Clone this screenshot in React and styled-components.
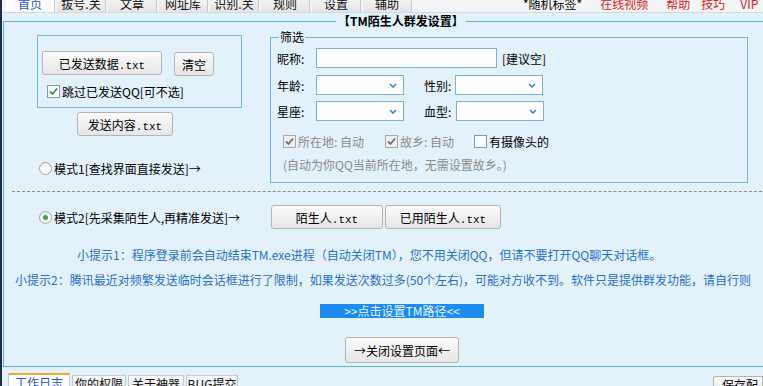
import React from 'react';
import styled, { createGlobalStyle } from 'styled-components';

const GlobalStyle = createGlobalStyle`
  html, body { margin: 0; padding: 0; background: #E3F1FA; }
  body {
    font-family: "Noto Sans CJK SC", "Liberation Sans", sans-serif;
    font-size: 12px;
    color: #000;
  }
`;

const Window = styled.div`
  width: 763px;
  height: 386px;
  overflow: hidden;
  box-sizing: border-box;
  background: #E3F1FA;
  border-left: 2px solid #1F2D47;
  display: flex;
  flex-direction: column;
`;

const TopBar = styled.div`
  height: 12px;
  flex: none;
  display: flex;
  align-items: flex-end;
  background: #F2F4F5;
  border-bottom: 1px solid #D3DADE;
  overflow: hidden;
  padding-left: 4px;
`;

const Tab = styled.div`
  width: 49px;
  height: 15px;
  line-height: 14px;
  margin-right: 2px;
  text-align: center;
  flex: none;
  background: ${p => (p.$active ? '#FFFFFF' : 'linear-gradient(#F6F6F6, #E4E4E4)')};
  color: ${p => (p.$active ? '#2255CC' : '#111')};
  border-right: 1px solid #C9C9C9;
  box-sizing: border-box;
`;

const HeadLink = styled.div`
  flex: none;
  height: 15px;
  line-height: 14px;
  margin-left: ${p => p.$ml}px;
  color: ${p => (p.$red ? '#E0201B' : '#000')};
  white-space: nowrap;
`;

const Main = styled.fieldset`
  margin: 1px 0 0 1px;
  padding: 0;
  width: 800px;
  height: 353px;
  box-sizing: border-box;
  border: 1px solid #5DB3D3;
  flex: none;
  min-inline-size: 0;
`;

const MainLegend = styled.legend`
  margin-left: 332px;
  padding: 0 2px;
  line-height: 14px;
  height: 14px;
  font-weight: 600;
`;

const TopSection = styled.div`
  display: flex;
  margin-top: 3px;
`;

const LeftCol = styled.div`
  width: 266px;
  flex: none;
  display: flex;
  flex-direction: column;
`;

const SubBox = styled.div`
  margin: 4px 0 0 33px;
  width: 205px;
  height: 73px;
  box-sizing: border-box;
  border: 1px solid #6DBAD8;
  padding: 15px 0 0 4px;
`;

const BtnRow = styled.div`
  display: flex;
  align-items: flex-start;
  gap: ${p => p.$gap || 0}px;
  margin-left: ${p => p.$ml || 0}px;
  margin-top: ${p => p.$mt || 0}px;
`;

const Button = styled.button`
  font-family: inherit;
  font-size: 12px;
  color: #000;
  width: ${p => p.$w}px;
  height: ${p => p.$h || 24}px;
  margin-top: ${p => p.$mt || 0}px;
  padding: 0;
  box-sizing: border-box;
  border: 1px solid #B4B4B4;
  border-radius: 3px;
  background: linear-gradient(#FBFBFB, #E6E6E6);
  white-space: nowrap;
  flex: none;
`;

const Mono = styled.span`
  font-family: "Liberation Mono", monospace;
  font-size: 11px;
`;

const CheckRow = styled.label`
  display: flex;
  align-items: center;
  gap: 2px;
  margin-top: ${p => p.$mt || 0}px;
  margin-left: ${p => p.$ml || 0}px;
  color: ${p => (p.$gray ? '#8A8A8A' : '#000')};
  white-space: nowrap;
  height: 15px;
`;

const CheckBox = styled.span`
  width: 13px;
  height: 13px;
  box-sizing: border-box;
  flex: none;
  border: 1px solid ${p => (p.$disabled ? '#A8A8A8' : '#7E9DB5')};
  background: ${p => (p.$disabled ? '#EFEFEF' : '#FFFFFF')};
  display: flex;
  align-items: center;
  justify-content: center;
`;

const RadioCircle = styled.span`
  width: 13px;
  height: 13px;
  box-sizing: border-box;
  flex: none;
  border-radius: 50%;
  border: 1px solid #9AA6B2;
  background: linear-gradient(#F4F4F4, #FFFFFF);
  display: flex;
  align-items: center;
  justify-content: center;
  &::after {
    content: '';
    width: 5px;
    height: 5px;
    border-radius: 50%;
    background: ${p => (p.$on ? '#3DA33D' : 'transparent')};
  }
`;

const Filter = styled.fieldset`
  margin: 0;
  padding: 0 0 0 6px;
  width: 478px;
  height: 152px;
  box-sizing: border-box;
  border: 1px solid #6DBAD8;
  min-inline-size: 0;
  flex: none;
`;

const FilterLegend = styled.legend`
  margin-left: 2px;
  padding: 0 1px;
  height: 12px;
  line-height: 12px;
`;

const FormRow = styled.div`
  display: flex;
  align-items: center;
  height: ${p => p.$h || 20}px;
  margin-top: ${p => p.$mt || 0}px;
  white-space: nowrap;
`;

const Label = styled.span`
  width: ${p => p.$w}px;
  flex: none;
  margin-left: ${p => p.$ml || 0}px;
`;

const TextBox = styled.div`
  width: ${p => p.$w}px;
  height: 20px;
  box-sizing: border-box;
  border: 1px solid #7EB3CF;
  background: #fff;
  flex: none;
  margin-right: 5px;
`;

const SelectBox = styled.div`
  width: ${p => p.$w}px;
  height: 20px;
  box-sizing: border-box;
  border: 1px solid #7EB3CF;
  background: #fff;
  flex: none;
  display: flex;
  align-items: center;
  justify-content: flex-end;
  padding-right: 6px;
`;

const Note = styled.div`
  color: #8A8A8A;
  margin: 9px 0 0 6px;
  line-height: 14px;
`;

const Dashed = styled.div`
  margin: 8px 0 0 8px;
  border-top: 1px dashed #8C8C8C;
`;

const ModeRow = styled.div`
  display: flex;
  align-items: center;
  margin-top: 13px;
  height: 24px;
`;

const ModeLabel = styled.div`
  width: 232px;
  flex: none;
  margin-left: 35px;
`;

const Tip = styled.div`
  color: #2673C9;
  line-height: 16px;
  white-space: nowrap;
  margin-top: ${p => p.$mt}px;
  margin-left: ${p => p.$ml}px;
`;

const PathBar = styled.div`
  margin: 16px 0 0 316px;
  width: 164px;
  height: 14px;
  line-height: 14px;
  background: #1C8CF0;
  color: #EAF4FF;
  text-align: center;
`;

const Center = styled.div`
  margin: 19px 0 0 341px;
`;

const BottomBar = styled.div`
  display: flex;
  align-items: flex-end;
  height: 19px;
  padding-left: 6px;
`;

const BottomTab = styled.div`
  height: ${p => (p.$active ? 13 : 11)}px;
  line-height: 16px;
  width: ${p => p.$w}px;
  margin-right: 2px;
  box-sizing: border-box;
  text-align: center;
  overflow: hidden;
  background: ${p => (p.$active ? '#FFFFFF' : 'linear-gradient(#FAFAFA, #EDEDED)')};
  border: 1px solid #C6CDD2;
  border-bottom: none;
  border-top: ${p => (p.$active ? '2px solid #F0A830' : '1px solid #C6CDD2')};
  color: ${p => (p.$active ? '#2255CC' : '#111')};
`;

const SaveBtn = styled.div`
  margin-left: auto;
  width: 50px;
  height: 10px;
  line-height: 16px;
  padding-left: 8px;
  box-sizing: border-box;
  overflow: hidden;
  border: 1px solid #B4B4B4;
  border-bottom: none;
  border-radius: 3px 0 0 0;
  background: linear-gradient(#FBFBFB, #EFEFEF);
`;

function Check({ on, disabled }) {
  return (
    <CheckBox $disabled={disabled}>
      {on && (
        <svg width="9" height="9" viewBox="0 0 9 9">
          <polyline points="1,4.5 3.5,7 8,1.5" fill="none" stroke={disabled ? '#6E6E6E' : '#2E9E2E'} strokeWidth="1.8" />
        </svg>
      )}
    </CheckBox>
  );
}

function Chevron() {
  return (
    <svg width="8" height="5" viewBox="0 0 8 5">
      <polyline points="1,1 4,4 7,1" fill="none" stroke="#3F86C6" strokeWidth="1.6" />
    </svg>
  );
}

const tabs = ['首页', '拔号.关', '文章', '网址库', '识别.关', '规则', '设置', '辅助'];

export default function App() {
  return (
    <>
      <GlobalStyle />
      <Window>
        <TopBar>
          {tabs.map((t, i) => (
            <Tab key={t} $active={i === 0}>{t}</Tab>
          ))}
          <HeadLink $ml={109}>*随机标签*</HeadLink>
          <HeadLink $ml={18} $red>在线视频</HeadLink>
          <HeadLink $ml={18} $red>帮助</HeadLink>
          <HeadLink $ml={11} $red>技巧</HeadLink>
          <HeadLink $ml={15} $red>VIP</HeadLink>
        </TopBar>

        <Main>
          <MainLegend>【TM陌生人群发设置】</MainLegend>
          <TopSection>
            <LeftCol>
              <SubBox>
                <BtnRow $gap={12}>
                  <Button $w={120}>已发送数据<Mono>.txt</Mono></Button>
                  <Button $w={40} $mt={1}>清空</Button>
                </BtnRow>
                <CheckRow $mt={8} $ml={5}>
                  <Check on />
                  跳过已发送QQ[可不选]
                </CheckRow>
              </SubBox>
              <BtnRow $ml={73} $mt={4}>
                <Button $w={96}>发送内容<Mono>.txt</Mono></Button>
              </BtnRow>
              <CheckRow $mt={25} $ml={35}>
                <RadioCircle />
                模式1[查找界面直接发送]→
              </CheckRow>
            </LeftCol>

            <Filter>
              <FilterLegend>筛选</FilterLegend>
              <FormRow $mt={5}>
                <Label $w={39}>昵称:</Label>
                <TextBox $w={181} />
                [建议空]
              </FormRow>
              <FormRow $mt={7}>
                <Label $w={39}>年龄:</Label>
                <SelectBox $w={88}><Chevron /></SelectBox>
                <Label $w={31} $ml={20}>性别:</Label>
                <SelectBox $w={88}><Chevron /></SelectBox>
              </FormRow>
              <FormRow $mt={6}>
                <Label $w={39}>星座:</Label>
                <SelectBox $w={88}><Chevron /></SelectBox>
                <Label $w={32} $ml={20}>血型:</Label>
                <SelectBox $w={88}><Chevron /></SelectBox>
              </FormRow>
              <FormRow $mt={13} $h={15}>
                <CheckRow $ml={6} $gray>
                  <Check on disabled />
                  所在地: 自动
                </CheckRow>
                <CheckRow $ml={21} $gray>
                  <Check on disabled />
                  故乡: 自动
                </CheckRow>
                <CheckRow $ml={20}>
                  <Check />
                  有摄像头的
                </CheckRow>
              </FormRow>
              <Note>(自动为你QQ当前所在地，无需设置故乡。)</Note>
            </Filter>
          </TopSection>

          <Dashed />

          <ModeRow>
            <ModeLabel>
              <CheckRow>
                <RadioCircle $on />
                模式2[先采集陌生人,再精准发送]→
              </CheckRow>
            </ModeLabel>
            <BtnRow $gap={2}>
              <Button $w={112}>陌生人<Mono>.txt</Mono></Button>
              <Button $w={116}>已用陌生人<Mono>.txt</Mono></Button>
            </BtnRow>
          </ModeRow>

          <Tip $mt={18} $ml={73}>
            小提示1：程序登录前会自动结束TM.exe进程（自动关闭TM），您不用关闭QQ，但请不要打开QQ聊天对话框。
          </Tip>
          <Tip $mt={9} $ml={11}>
            小提示2：腾讯最近对频繁发送临时会话框进行了限制，如果发送次数过多(50个左右)，可能对方收不到。软件只是提供群发功能，请自行则
          </Tip>

          <PathBar>&gt;&gt;点击设置TM路径&lt;&lt;</PathBar>

          <Center>
            <Button $w={114} $h={26}>→关闭设置页面←</Button>
          </Center>
        </Main>

        <BottomBar>
          <BottomTab $active $w={62}>工作日志</BottomTab>
          <BottomTab $w={54}>你的权限</BottomTab>
          <BottomTab $w={56}>关于神器</BottomTab>
          <BottomTab $w={52}>BUG提交</BottomTab>
          <SaveBtn>保存配置</SaveBtn>
        </BottomBar>
      </Window>
    </>
  );
}
